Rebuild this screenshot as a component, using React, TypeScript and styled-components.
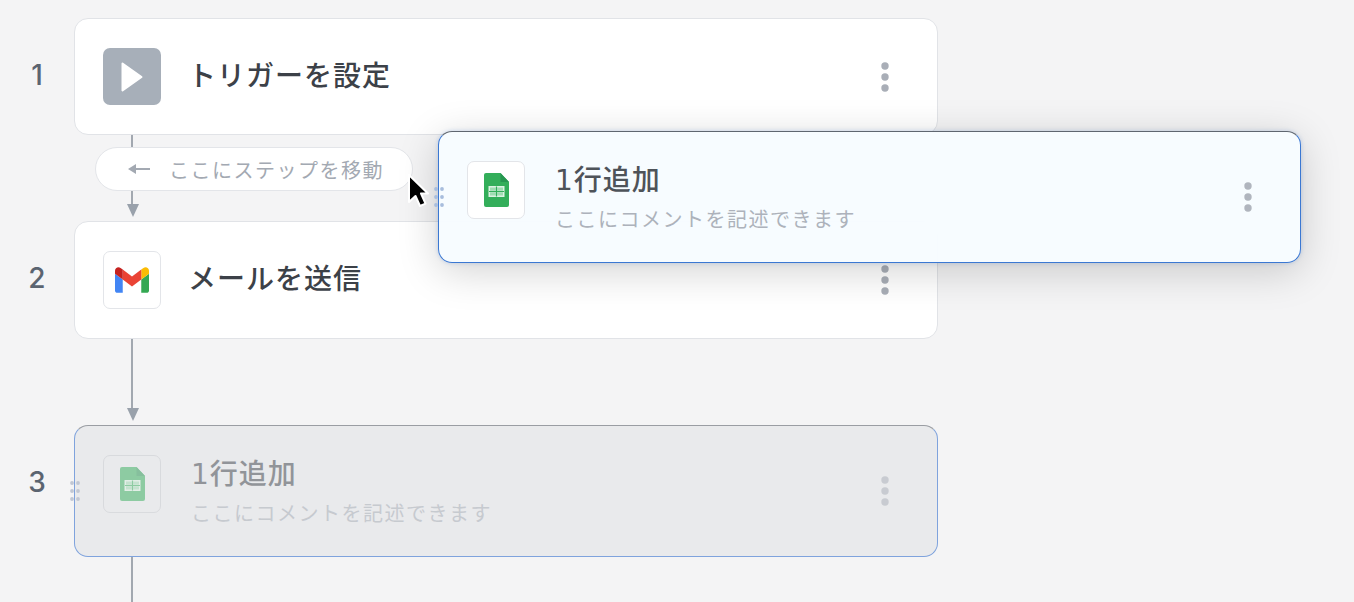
import React from 'react';
import styled, { createGlobalStyle } from 'styled-components';

const GlobalStyle = createGlobalStyle`
  html, body {
    margin: 0;
    height: 100%;
    background: #f4f4f5;
    overflow: hidden;
    font-family: "Inter", "Noto Sans CJK JP", sans-serif;
  }
`;

const PlayIcon = () => (
  <svg width="22" height="30" viewBox="0 0 22 30">
    <path d="M1.5 1.5 L20.5 15 L1.5 28.500 Z" fill="#fff" stroke="#fff" strokeWidth="2" strokeLinejoin="round" />
  </svg>
);

const GmailIcon = () => (
  <svg width="34" height="26" viewBox="52 42 88 66">
    <path fill="#4285f4" d="M58 108h14V74L52 59v43c0 3.32 2.69 6 6 6" />
    <path fill="#34a853" d="M120 108h14c3.32 0 6-2.69 6-6V59l-20 15" />
    <path fill="#fbbc04" d="M120 48v26l20-15v-8c0-7.42-8.47-11.65-14.4-7.2" />
    <path fill="#ea4335" d="M72 74V48l24 18 24-18v26L96 92" />
    <path fill="#c5221f" d="M52 51v8l20 15V48l-5.6-4.2c-5.94-4.45-14.4-.22-14.4 7.2" />
  </svg>
);

const SheetsIcon = () => (
  <svg width="25" height="34" viewBox="0 0 25 34">
    <path d="M2 0h14.500L25 9v23a2 2 0 0 1-2 2H2a2 2 0 0 1-2-2V2a2 2 0 0 1 2-2z" fill="#33ae5a" />
    <path d="M16.500 0L25 9h-8.500z" fill="#269650" />
    <path d="M4.500 13h16v11h-16z" fill="#dcf2e3" />
    <path d="M6 14.500h5.800v3.300H6zM13.200 14.500H19v3.300h-5.800zM6 19.200h5.800v3.300H6zM13.200 19.200H19v3.300h-5.800z" fill="#9fdcb2" />
    <path d="M11.900 13.500h1.200v10h-1.200zM5 17.900h15v1.200H5z" fill="#33ae5a" />
  </svg>
);

const MenuDots = () => (
  <svg width="8" height="30" viewBox="0 0 8 30">
    <circle cx="4" cy="4" r="3.700" />
    <circle cx="4" cy="15" r="3.700" />
    <circle cx="4" cy="26" r="3.700" />
  </svg>
);

const HandleDots = () => (
  <svg width="10" height="20" viewBox="0 0 10 20">
    {[2, 10, 18].map((y) =>
      [2, 8].map((x) => <circle key={`${x}-${y}`} cx={x} cy={y} r="1.900" />)
    )}
  </svg>
);

const LeftArrow = () => (
  <svg width="22" height="12" viewBox="0 0 22 12">
    <path d="M0 6L8 1v4h14v2H8v4z" fill="#a3a9b2" />
  </svg>
);

const Cursor = () => (
  <svg width="26" height="38" viewBox="0 0 26 38">
    <path
      d="M3 3v27l6.500-6 4.500 10 5.500-2.400L15 21.500H22z"
      fill="#000"
      stroke="#fff"
      strokeWidth="2"
      strokeLinejoin="round"
    />
  </svg>
);

type CardVariant = 'normal' | 'ghost' | 'dragging';

type StepCardProps = {
  icon: React.ReactNode;
  title: string;
  comment?: string;
  plain?: boolean;
  variant?: CardVariant;
};

const StepCard: React.FC<StepCardProps> = ({ icon, title, comment, plain, variant = 'normal' }) => (
  <Card $variant={variant}>
    {variant !== 'normal' && (
      <Handle $variant={variant}>
        <HandleDots />
      </Handle>
    )}
    <CardBody $hasComment={!!comment}>
      <IconBox $plain={plain} $variant={variant}>{icon}</IconBox>
      <TextBlock $variant={variant}>
        <Title $hasComment={!!comment}>{title}</Title>
        {comment && <Comment>{comment}</Comment>}
      </TextBlock>
      <MenuButton $variant={variant} $hasComment={!!comment}>
        <MenuDots />
      </MenuButton>
    </CardBody>
  </Card>
);

const App: React.FC = () => {
  return (
    <>
      <GlobalStyle />
      <Page>
        <StepRow>
          <StepNumber>1</StepNumber>
          <StepCard plain icon={<PlayIcon />} title="トリガーを設定" />
        </StepRow>
        <Connector $height={86}>
          <Line />
          <ArrowHead />
          <MovePill>
            <LeftArrow />
            <span>ここにステップを移動</span>
          </MovePill>
        </Connector>
        <StepRow>
          <StepNumber>2</StepNumber>
          <StepCard icon={<GmailIcon />} title="メールを送信" />
        </StepRow>
        <Connector $height={86}>
          <Line />
          <ArrowHead />
        </Connector>
        <StepRow>
          <StepNumber>3</StepNumber>
          <StepCard
            variant="ghost"
            icon={<SheetsIcon />}
            title="1行追加"
            comment="ここにコメントを記述できます"
          />
        </StepRow>
        <Connector $height={46}>
          <Line />
        </Connector>
        <DragLayer>
          <StepCard
            variant="dragging"
            icon={<SheetsIcon />}
            title="1行追加"
            comment="ここにコメントを記述できます"
          />
        </DragLayer>
        <CursorLayer>
          <Cursor />
        </CursorLayer>
      </Page>
    </>
  );
};

export default App;

const contentOpacity = ({ $variant }: { $variant: CardVariant }) =>
  $variant === 'ghost' ? 0.5 : $variant === 'dragging' ? 0.9 : 1;

const Page = styled.div`
  position: relative;
  height: 602px;
  padding-top: 18px;
  box-sizing: border-box;
  overflow: hidden;
`;

const StepRow = styled.div`
  display: flex;
  align-items: flex-start;
`;

const StepNumber = styled.div`
  width: 74px;
  margin-top: 38px;
  text-align: center;
  font-size: 28px;
  line-height: 38px;
  font-weight: 500;
  color: #5b6470;
`;

const Card = styled.div<{ $variant: CardVariant }>`
  position: relative;
  width: ${({ $variant }) => ($variant === 'dragging' ? 863 : 864)}px;
  box-sizing: border-box;
  border-radius: 14px;
  border: 1px solid ${({ $variant }) => ($variant === 'normal' ? '#e1e3e7' : $variant === 'ghost' ? '#7fa3dd' : '#3b78d2')};
  border-top-color: ${({ $variant }) => ($variant === 'normal' ? '#e1e3e7' : $variant === 'ghost' ? '#9a9da3' : '#5f6670')};
  background: ${({ $variant }) => ($variant === 'normal' ? '#fff' : $variant === 'ghost' ? '#e9eaec' : 'rgba(247, 252, 255, 0.97)')};
  box-shadow: ${({ $variant }) =>
    $variant === 'dragging' ? '0 8px 40px rgba(0, 0, 0, 0.18), 0 0 4px rgba(59, 120, 210, 0.25)' : 'none'};
`;

const CardBody = styled.div<{ $hasComment: boolean }>`
  display: flex;
  align-items: flex-start;
  gap: 29px;
  padding: 29px 40px ${({ $hasComment }) => ($hasComment ? 28 : 29)}px 28px;
`;

const Handle = styled.div<{ $variant: CardVariant }>`
  position: absolute;
  left: -5px;
  top: 50%;
  transform: translateY(-50%);
  display: flex;
  svg {
    display: block;
    fill: ${({ $variant }) => ($variant === 'ghost' ? '#c1c7d3' : '#a8bddd')};
  }
`;

const IconBox = styled.div<{ $plain?: boolean; $variant: CardVariant }>`
  width: 58px;
  height: ${({ $plain }) => ($plain ? 57 : 58)}px;
  flex: none;
  box-sizing: border-box;
  display: flex;
  align-items: center;
  justify-content: center;
  border-radius: 7px;
  opacity: ${({ $variant }) => ($variant === 'ghost' ? 0.5 : 1)};
  background: ${({ $plain, $variant }) => ($plain ? '#a7afb9' : $variant === 'ghost' ? 'transparent' : '#fff')};
  border: ${({ $plain, $variant }) =>
    $plain ? 'none' : $variant === 'ghost' ? '1px solid #c9cbd0' : '1px solid #e3e5e9'};
  svg {
    display: block;
  }
`;

const TextBlock = styled.div<{ $variant: CardVariant }>`
  flex: 1;
  min-width: 0;
  align-self: center;
  display: flex;
  flex-direction: column;
  gap: 5px;
  opacity: ${contentOpacity};
`;

const Title = styled.div<{ $hasComment: boolean }>`
  margin-left: ${({ $hasComment }) => ($hasComment ? 1 : -2)}px;
  font-family: "DejaVu Sans", "Noto Sans CJK JP", sans-serif;
  font-size: 28px;
  line-height: 40px;
  font-weight: 500;
  letter-spacing: 1px;
  color: #3c4148;
`;

const Comment = styled.div`
  margin-left: 1px;
  font-size: 20px;
  line-height: 28px;
  letter-spacing: 1.500px;
  color: #a5abb4;
`;

const MenuButton = styled.div<{ $variant: CardVariant; $hasComment: boolean }>`
  width: 24px;
  flex: none;
  align-self: center;
  margin-bottom: ${({ $hasComment }) => ($hasComment ? 2 : 0)}px;
  display: flex;
  justify-content: center;
  opacity: ${contentOpacity};
  svg {
    display: block;
    fill: #a9aeb7;
  }
`;

const Connector = styled.div<{ $height: number }>`
  position: relative;
  width: 117px;
  height: ${({ $height }) => $height}px;
  margin-left: 74px;
  display: flex;
  flex-direction: column;
  align-items: center;
`;

const Line = styled.div`
  flex: 1;
  width: 2px;
  margin-right: 1px;
  background: #a2a8b0;
`;

const ArrowHead = styled.div`
  width: 0;
  height: 0;
  margin-bottom: 4px;
  border-left: 6.500px solid transparent;
  border-right: 6.500px solid transparent;
  border-top: 13px solid #99a1ab;
`;

const MovePill = styled.div`
  position: absolute;
  left: 21px;
  top: 12px;
  width: 318px;
  height: 44px;
  box-sizing: border-box;
  display: flex;
  align-items: center;
  gap: 19px;
  padding-left: 32px;
  background: #fff;
  border: 1px solid #e3e5e9;
  border-radius: 22px;
  font-size: 20px;
  letter-spacing: 1.500px;
  color: #a3a9b2;
  white-space: nowrap;
`;

const DragLayer = styled.div`
  position: absolute;
  left: 438px;
  top: 131px;
  z-index: 2;
`;

const CursorLayer = styled.div`
  position: absolute;
  left: 406px;
  top: 172px;
  z-index: 3;
  svg {
    display: block;
  }
`;
